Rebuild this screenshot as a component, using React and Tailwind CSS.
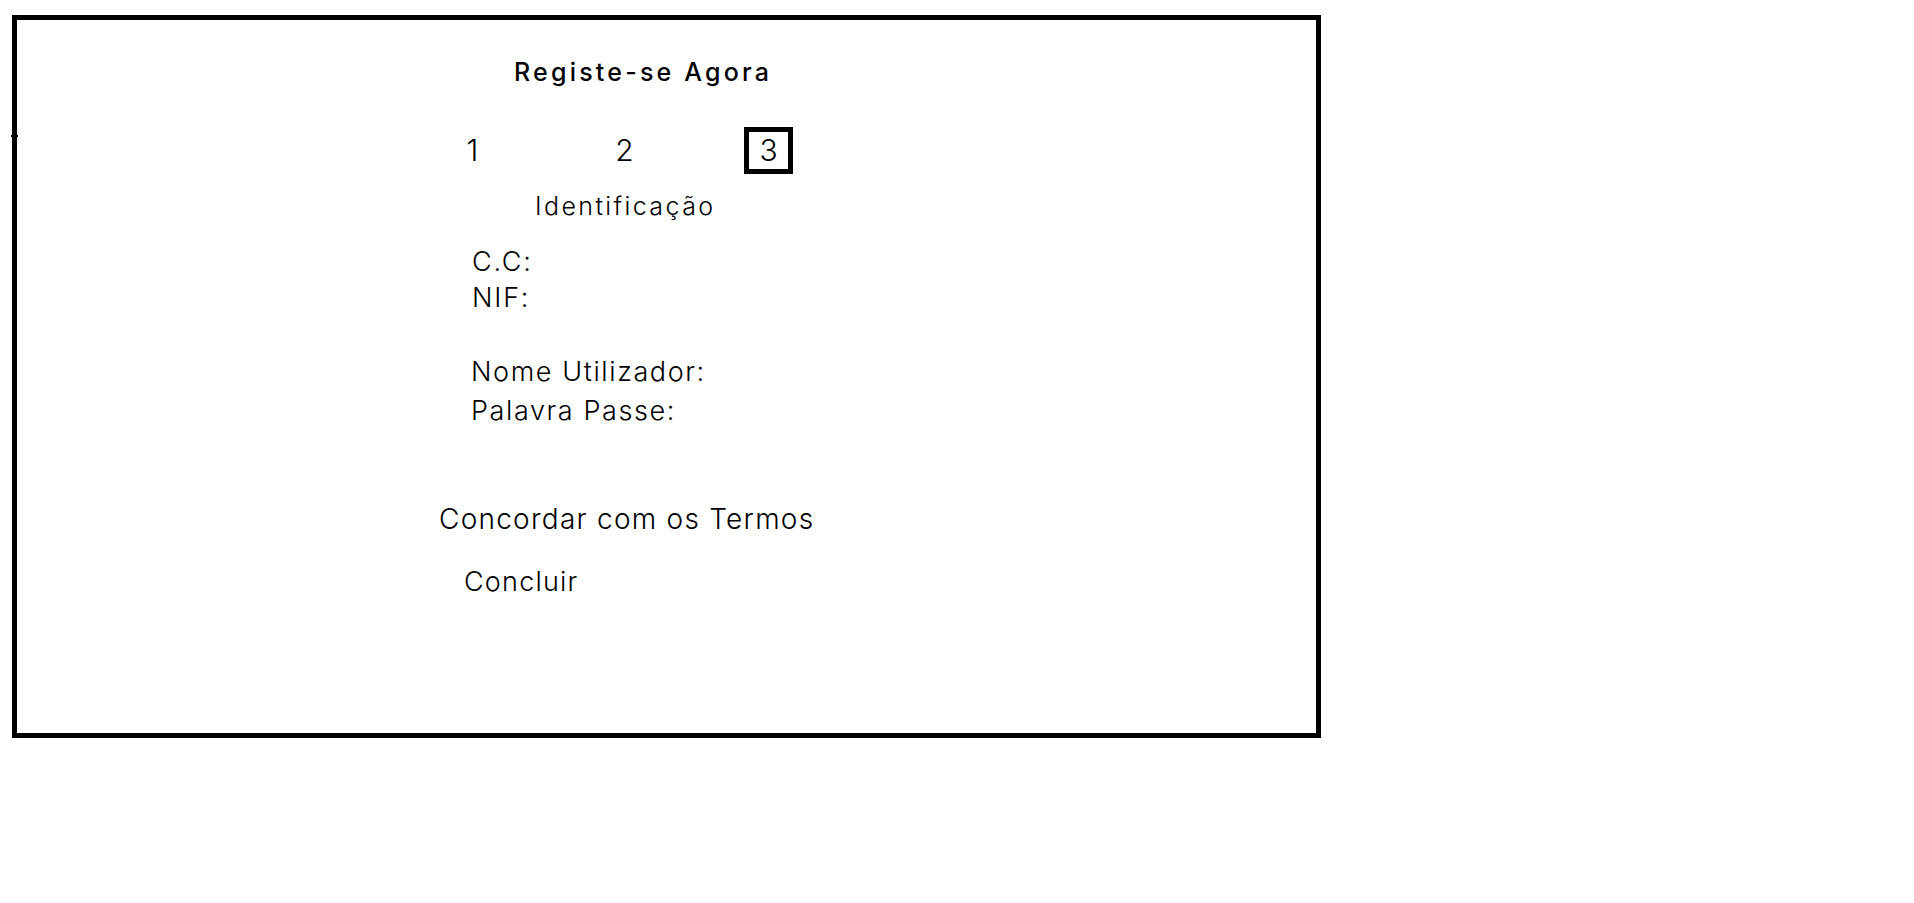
export default function App() {
  const f = { fontFamily: "Inter, 'Noto Sans', sans-serif" };
  return (
    <div className="bg-white w-[1914px] h-[903px] pt-[15px] pl-[12px]" style={f}>
      <div className="relative w-[1309px] h-[723px] border-[5px] border-black text-black">
        <div className="absolute left-[-6px] top-[115px] w-[7px] h-[2px] bg-black" />
        <div className="ml-[497px] mt-[37px] text-[25px] leading-[30px] font-medium tracking-[3.2px] whitespace-nowrap">
          Registe-se Agora
        </div>
        <div className="flex mt-[40px] text-[30px] leading-[37px] font-light">
          <div className="ml-[431px] w-[49px] h-[47px] pt-[5px] text-center">1</div>
          <div className="ml-[103px] w-[49px] h-[47px] pt-[5px] text-center">2</div>
          <div className="ml-[95px] w-[49px] h-[47px] border-[5px] border-black text-center">3</div>
        </div>
        <div className="ml-[518px] mt-[17px] text-[25px] leading-[30px] font-light tracking-[2.4px] whitespace-nowrap">
          Identificação
        </div>
        <div className="ml-[455px] mt-[23px] text-[27px] leading-[36px] font-light tracking-[1.8px] whitespace-nowrap">
          <div>C.C:</div>
          <div>NIF:</div>
        </div>
        <div className="ml-[454px] mt-[36px] text-[27px] leading-[39px] font-light tracking-[1.6px] whitespace-nowrap">
          <div>Nome Utilizador:</div>
          <div>Palavra Passe:</div>
        </div>
        <div className="ml-[422px] mt-[73px] text-[28px] leading-[32px] font-light tracking-[1.25px] whitespace-nowrap">
          Concordar com os Termos
        </div>
        <div className="ml-[447px] mt-[32px] text-[27px] leading-[30px] font-light tracking-[1.2px] whitespace-nowrap">
          Concluir
        </div>
      </div>
    </div>
  );
}
